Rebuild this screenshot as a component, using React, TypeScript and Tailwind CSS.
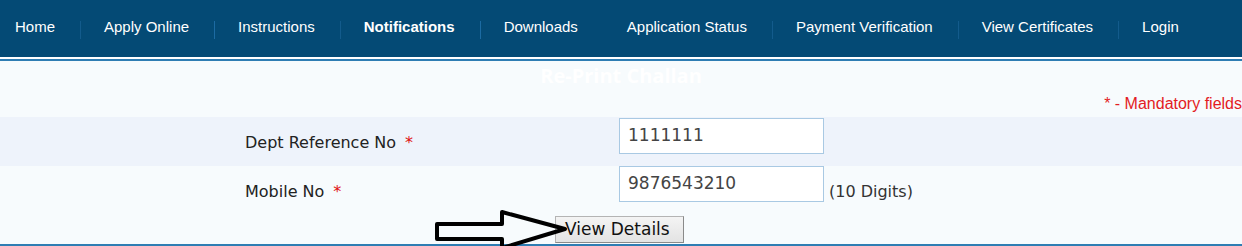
import React, { Fragment } from "react";

const navItems: { label: string; bold?: boolean; sep: string }[] = [
  { label: "Home", sep: "bg-[#135b8c]" },
  { label: "Apply Online", sep: "bg-[#1c6ba3]" },
  { label: "Instructions", sep: "bg-[#135b8c]" },
  { label: "Notifications", bold: true, sep: "bg-[#1c6ba3]" },
  { label: "Downloads", sep: "bg-transparent" },
  { label: "Application Status", sep: "bg-[#135b8c]" },
  { label: "Payment Verification", sep: "bg-[#135b8c]" },
  { label: "View Certificates", sep: "bg-[#135b8c]" },
  { label: "Login", sep: "" },
];

export default function App() {
  return (
    <div className="relative h-[246px] w-[1242px] overflow-hidden bg-[#f7fbfd]">
      <nav className="flex h-[57px] items-center bg-[#044a75] pb-[2px] pl-[15px] font-['Liberation_Sans',Arial,sans-serif] text-[15px] text-white">
        {navItems.map((it, i) => (
          <Fragment key={it.label}>
            <span className={it.bold ? "whitespace-nowrap font-bold" : "whitespace-nowrap"}>{it.label}</span>
            {i < navItems.length - 1 && (
              <span className={`ml-[25px] mr-[23px] mt-[5px] h-[18px] w-px ${it.sep}`} />
            )}
          </Fragment>
        ))}
      </nav>
      <div className="h-[2px] bg-white" />
      <div className="h-[2px] bg-[#2e7db3]" />

      <div className="flex h-[30px] items-center justify-center font-['Open_Sans',sans-serif] text-[20px] font-bold text-white">
        Re-Print Challan
      </div>
      <div className="flex h-[26px] items-center justify-end whitespace-nowrap font-['Liberation_Sans',Arial,sans-serif] text-[16px] text-[#e31c23]">
        * - Mandatory fields
      </div>

      <div className="font-['DejaVu_Sans',Verdana,sans-serif]">
        <div className="flex h-[49px] bg-[#eef3fb]">
          <div className="flex w-[619px] items-center pl-[245px] pt-[3px] text-[16px] text-[#222]">
            Dept Reference No<span className="ml-[9px] text-[#e01010]">*</span>
          </div>
          <div className="pt-[1px]">
            <div className="flex h-[36px] w-[205px] items-center border border-[#a9c9e3] bg-white pl-[8px] text-[17px] text-[#444]">
              1111111
            </div>
          </div>
        </div>

        <div className="flex h-[48px]">
          <div className="flex w-[619px] items-center pl-[245px] pt-[3px] text-[16px] text-[#222]">
            Mobile No<span className="ml-[9px] text-[#e01010]">*</span>
          </div>
          <div className="flex items-start">
            <div className="flex h-[36px] w-[205px] items-center border border-[#a9c9e3] bg-white pl-[8px] text-[17px] text-[#444]">
              9876543210
            </div>
            <span className="ml-[5px] mt-[14px] text-[16px] text-[#333]">(10 Digits)</span>
          </div>
        </div>

        <div className="flex h-[30px] items-start pl-[555px] pt-[2px]">
          <button className="flex h-[27px] w-[129px] items-center border border-[#b4b4b4] border-b-[#8a8a8a] border-r-[#8a8a8a] bg-gradient-to-b from-[#f4f4f4] to-[#e3e3e3] pl-[9px] text-[17px] text-[#111]">
            View Details
          </button>
        </div>
      </div>
      <div className="h-[2px] bg-[#2e7db3]" />

      <svg
        className="pointer-events-none absolute left-0 top-0"
        width="1242"
        height="246"
        viewBox="0 0 1242 246"
      >
        <path
          d="M437 224 H502 V212 L565 229 L502 248 V239 H437 Z"
          fill="none"
          stroke="#000"
          strokeWidth="4"
          strokeLinejoin="round"
        />
      </svg>
    </div>
  );
}
